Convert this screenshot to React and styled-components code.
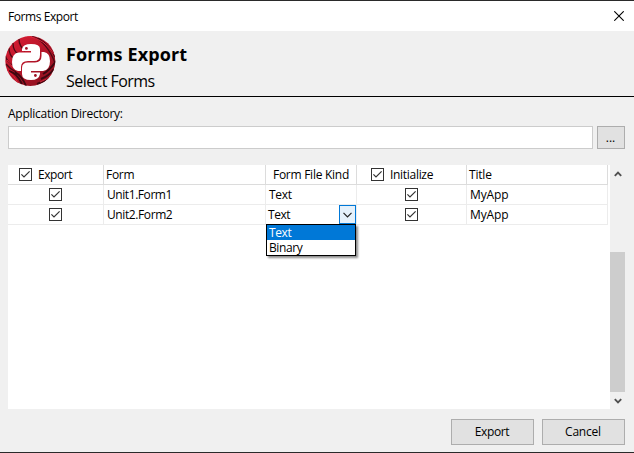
import React from "react";
import styled, { createGlobalStyle, css } from "styled-components";

const GlobalStyle = createGlobalStyle`
  * { box-sizing: border-box; }
  body { margin: 0; background: #f0f0f0; overflow: hidden; }
`;

const Dialog = styled.div`
  width: 634px;
  height: 453px;
  display: flex;
  flex-direction: column;
  background: #f0f0f0;
  border-top: 1px solid #2a2a2a;
  border-bottom: 1px solid #2a2a2a;
  font: 12px/15px "Open Sans", "Noto Sans", sans-serif;
  color: #000;
  white-space: nowrap;
`;

const Label = styled.span`
  letter-spacing: ${(p) => p.$spacing ?? -0.3}px;
`;

const TitleBar = styled.header`
  height: 30px;
  flex: none;
  display: flex;
  align-items: center;
  justify-content: space-between;
  padding: 0 10px 0 8px;
  background: #fff;
`;

const Banner = styled.div`
  height: 66px;
  flex: none;
  display: flex;
  gap: 10px;
  padding: 5px 0 0 5px;
  border-bottom: 1px solid #000;
`;

const Headings = styled.div`
  padding-top: 5px;
`;

const Heading = styled.h1`
  margin: 0;
  font-size: 18px;
  line-height: 26px;
  font-weight: 700;
  letter-spacing: 0.15px;
`;

const SubHeading = styled.p`
  margin: 0;
  font-size: 16px;
  line-height: 28px;
  letter-spacing: -0.55px;
`;

const DirectorySection = styled.section`
  height: 68px;
  flex: none;
  padding: 9px 9px 0 8px;
`;

const DirectoryRow = styled.div`
  display: flex;
  gap: 4px;
  margin-top: 5px;
`;

const DirectoryField = styled.input`
  width: 585px;
  height: 23px;
  border: 1px solid #ccc;
  background: #fff;
  outline: none;
`;

const Button = styled.button`
  width: ${(p) => p.$width}px;
  height: ${(p) => p.$height}px;
  padding: 0 1px 1px 0;
  border: 1px solid #adadad;
  background: #e1e1e1;
  color: #000;
  font: inherit;
`;

const GridPanel = styled.section`
  height: 244px;
  flex: none;
  display: flex;
  margin: 0 9px 0 8px;
`;

const GridArea = styled.div`
  width: 602px;
  background: #fff;
`;

const Row = styled.div`
  width: 600px;
  height: 20px;
  display: grid;
  grid-template-columns: 96px 162px 91px 110px 141px;
`;

const Cell = styled.div`
  display: flex;
  align-items: center;
  min-width: 0;
  height: 20px;
  padding-left: ${(p) => p.$indent ?? 0}px;
  border-right: 1px solid ${(p) => (p.$header ? "#dcdcdc" : "#ececec")};
  border-bottom: 1px solid ${(p) => (p.$header ? "#dcdcdc" : "#ececec")};
  ${(p) => p.$checkbox && css`justify-content: center;`}
`;

const HeaderCheck = styled.div`
  display: flex;
  align-items: center;
  gap: 6px;
`;

const ComboCell = styled(Cell)`
  position: relative;
  justify-content: space-between;
`;

const ComboButton = styled.button`
  width: 17px;
  height: 19px;
  flex: none;
  display: flex;
  align-items: center;
  justify-content: center;
  padding: 0;
  border: 1px solid #0078d7;
  background: #e5f1fb;
`;

const Menu = styled.div`
  position: absolute;
  left: 0;
  top: 19px;
  z-index: 1;
  width: 90px;
  height: 32px;
  border: 1px solid #000;
  background: #fff;
  box-shadow: 2px 2px 2px rgba(0, 0, 0, 0.45);
`;

const MenuItem = styled.div`
  height: 15px;
  line-height: 15px;
  padding-left: 2px;
  background: ${(p) => (p.$selected ? "#0078d7" : "#fff")};
  color: ${(p) => (p.$selected ? "#fff" : "#000")};
`;

const ScrollBar = styled.div`
  width: 15px;
  display: flex;
  flex-direction: column;
  background: #f0f0f0;
`;

const ScrollArrow = styled.div`
  height: 17px;
  display: flex;
  align-items: center;
  justify-content: center;
`;

const ScrollThumb = styled.div`
  height: 140px;
  margin-top: 70px;
  background: #cdcdcd;
`;

const Footer = styled.footer`
  display: flex;
  justify-content: flex-end;
  gap: 8px;
  padding: 10px 9px 0 0;
`;

function Check() {
  return (
    <svg width="13" height="13" viewBox="0 0 13 13">
      <rect x=".5" y=".5" width="12" height="12" fill="#fff" stroke="#333" />
      <path d="M2.4 6.3 5 8.9 10.6 3.3" fill="none" stroke="#333" strokeWidth="1.2" />
    </svg>
  );
}

function CloseIcon() {
  return (
    <svg width="10" height="10" viewBox="0 0 10 10">
      <path d="M.3.3l9.4 9.4M9.7.3.3 9.7" stroke="#000" strokeWidth="1.1" />
    </svg>
  );
}

function Chevron({ up }) {
  return (
    <svg width="8" height="6" viewBox="0 0 8 6">
      <path d={up ? "M.8 4.8 4 1.6l3.2 3.2" : "M.8 1.2 4 4.4l3.2-3.2"} fill="none" stroke="#505050" strokeWidth="1.9" />
    </svg>
  );
}

function Logo() {
  return (
    <svg width="51" height="51" viewBox="0 0 51 51">
      <defs>
        <clipPath id="disc"><circle cx="25.3" cy="25" r="25" /></clipPath>
        <linearGradient id="red" x1="0" y1="0" x2=".8" y2="1">
          <stop offset="0" stopColor="#dc1f35" />
          <stop offset=".5" stopColor="#b9162a" />
          <stop offset="1" stopColor="#8a101e" />
        </linearGradient>
      </defs>
      <g clipPath="url(#disc)">
        <rect width="51" height="51" fill="url(#red)" />
        <g fill="none" stroke="#4c0a14" strokeWidth="1.3">
          <path d="M27 0Q42 6 50 27M33 2Q46 10 50 21" />
          <path d="M14 3Q14 10 20 15M8 7Q8 15 14 19M4 12Q4 19 9 23" />
          <path d="M0 19Q2 26 8 30M1 28Q5 33 11 36" />
        </g>
        <g fill="none" stroke="#3f0710" strokeWidth="2">
          <path d="M4 35Q12 37 17 48M10 36Q17 40 21 50M38 38Q45 34 51 25M36 43Q44 40 49 33M32 48Q39 46 45 41" />
        </g>
        <path d="M22 0Q40 3 49 18M2 24Q6 31 14 34M2 34Q10 40 13 47M35 46Q42 44 48 37" fill="none" stroke="#df263b" />
      </g>
      <path d="M17 15V13Q18 8 26 8Q35 8 35 13V19Q35 25 29 25H23Q16 25 16 31V35H13Q7 34 7 26Q7 17 14 16.5H26V15Z" fill="#fff" />
      <path d="M36.5 16H39Q45 17 45 25Q45 34 38 35H26V36.5H35V38Q34 44 26 44Q17 44 17 38V32Q17 26.5 23 26.5H30Q36.5 26 36.5 20Z" fill="#fff" />
      <circle cx="21.4" cy="12.4" r="1.4" fill="#a01425" />
      <circle cx="30.4" cy="39.5" r="1.4" fill="#a01425" />
    </svg>
  );
}

export default function App() {
  return (
    <>
      <GlobalStyle />
      <Dialog>
        <TitleBar>
          <Label $spacing={-0.42}>Forms Export</Label>
          <CloseIcon />
        </TitleBar>
        <Banner>
          <Logo />
          <Headings>
            <Heading>Forms Export</Heading>
            <SubHeading>Select Forms</SubHeading>
          </Headings>
        </Banner>
        <DirectorySection>
          <Label $spacing={-0.26}>Application Directory:</Label>
          <DirectoryRow>
            <DirectoryField aria-label="Application Directory" />
            <Button $width={28} $height={23}>...</Button>
          </DirectoryRow>
        </DirectorySection>
        <GridPanel>
          <GridArea>
            <Row>
              <Cell $header $indent={11}><HeaderCheck><Check /><Label $spacing={-0.45}>Export</Label></HeaderCheck></Cell>
              <Cell $header $indent={2}><Label>Form</Label></Cell>
              <Cell $header $indent={7}><Label $spacing={-0.27}>Form File Kind</Label></Cell>
              <Cell $header $indent={14}><HeaderCheck><Check /><Label>Initialize</Label></HeaderCheck></Cell>
              <Cell $header $indent={2}><Label $spacing={-0.2}>Title</Label></Cell>
            </Row>
            <Row>
              <Cell $checkbox><Check /></Cell>
              <Cell $indent={3}><Label $spacing={-0.43}>Unit1.Form1</Label></Cell>
              <Cell $indent={3}><Label>Text</Label></Cell>
              <Cell $checkbox><Check /></Cell>
              <Cell $indent={3}><Label $spacing={-0.1}>MyApp</Label></Cell>
            </Row>
            <Row>
              <Cell $checkbox><Check /></Cell>
              <Cell $indent={3}><Label $spacing={-0.4}>Unit2.Form2</Label></Cell>
              <ComboCell $indent={2}>
                <Label $spacing={-0.45}>Text</Label>
                <ComboButton aria-label="Form file kind">
                  <svg width="9" height="6" viewBox="0 0 9 6">
                    <path d="M.5.8l4 4 4-4" fill="none" stroke="#222" strokeWidth="1.2" />
                  </svg>
                </ComboButton>
                <Menu>
                  <MenuItem $selected><Label $spacing={-0.4}>Text</Label></MenuItem>
                  <MenuItem><Label $spacing={-0.4}>Binary</Label></MenuItem>
                </Menu>
              </ComboCell>
              <Cell $checkbox><Check /></Cell>
              <Cell $indent={3}><Label $spacing={-0.1}>MyApp</Label></Cell>
            </Row>
          </GridArea>
          <ScrollBar>
            <ScrollArrow><Chevron up /></ScrollArrow>
            <ScrollThumb />
            <ScrollArrow><Chevron /></ScrollArrow>
          </ScrollBar>
        </GridPanel>
        <Footer>
          <Button $width={83} $height={26}><Label $spacing={-0.4}>Export</Label></Button>
          <Button $width={83} $height={26}><Label $spacing={-0.2}>Cancel</Label></Button>
        </Footer>
      </Dialog>
    </>
  );
}
